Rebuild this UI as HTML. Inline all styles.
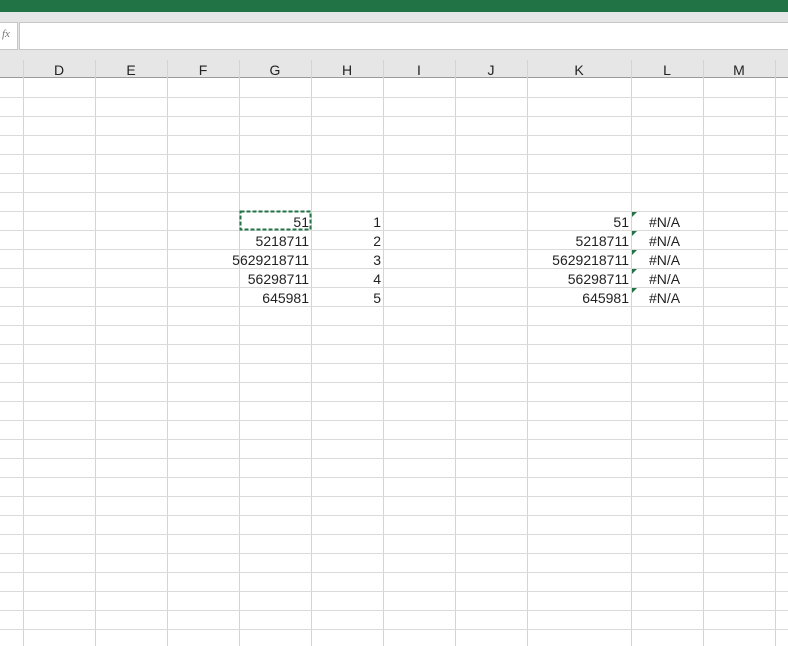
<!DOCTYPE html>
<html><head><style>
body{margin:0;width:788px;height:646px;overflow:hidden;background:#fff;font-family:"Liberation Sans","Noto Sans CJK SC",sans-serif;position:relative}
.a{position:absolute}
.t{position:absolute;font-size:14px;color:#222;text-align:right;line-height:19px}
</style></head><body>
<div class="a" style="left:0;top:0;width:788px;height:12px;background:#217346"></div>
<div class="a" style="left:0;top:12px;width:788px;height:66px;background:#e6e6e6"></div>
<div class="a" style="left:-1px;top:22px;width:17px;height:26px;background:#fff;border:1px solid #c6c6c6"></div>
<div class="a" style="left:2px;top:28px;font:italic 11px 'Liberation Serif',serif;color:#777">fx</div>
<div class="a" style="left:19px;top:22px;width:770px;height:26px;background:#fff;border:1px solid #c6c6c6"></div>
<div class="a" style="left:0;top:77px;width:788px;height:1px;background:#9b9b9b"></div>
<svg class="a" style="left:0;top:0" width="788" height="646">
<g stroke="#d4d4d4" stroke-width="1">
<line x1="23.5" y1="60" x2="23.5" y2="646"/><line x1="95.5" y1="60" x2="95.5" y2="646"/><line x1="167.5" y1="60" x2="167.5" y2="646"/><line x1="239.5" y1="60" x2="239.5" y2="646"/><line x1="311.5" y1="60" x2="311.5" y2="646"/><line x1="383.5" y1="60" x2="383.5" y2="646"/><line x1="455.5" y1="60" x2="455.5" y2="646"/><line x1="527.5" y1="60" x2="527.5" y2="646"/><line x1="631.5" y1="60" x2="631.5" y2="646"/><line x1="703.5" y1="60" x2="703.5" y2="646"/><line x1="775.5" y1="60" x2="775.5" y2="646"/>
</g>
<g stroke="#dadada" stroke-width="1" id="rows"></g>
<rect x="240.5" y="211.5" width="70" height="18" fill="none" stroke="#217346" stroke-width="2" stroke-dasharray="4,2"/>
<g fill="#217346">
<polygon points="632,212 637,212 632,217"/><polygon points="632,231 637,231 632,236"/><polygon points="632,250 637,250 632,255"/><polygon points="632,269 637,269 632,274"/><polygon points="632,288 637,288 632,293"/>
</g>
<g font-family="Liberation Sans" font-size="14" fill="#222" text-anchor="middle">
<text x="59" y="75">D</text><text x="131" y="75">E</text><text x="203" y="75">F</text><text x="275" y="75">G</text><text x="347" y="75">H</text><text x="419" y="75">I</text><text x="491" y="75">J</text><text x="579" y="75">K</text><text x="667" y="75">L</text><text x="739" y="75">M</text>
</g>
<g font-family="Liberation Sans" font-size="14" fill="#222" text-anchor="end">
<text x="309" y="227">51</text><text x="309" y="246">5218711</text><text x="309" y="265">5629218711</text><text x="309" y="284">56298711</text><text x="309" y="303">645981</text>
<text x="381" y="227">1</text><text x="381" y="246">2</text><text x="381" y="265">3</text><text x="381" y="284">4</text><text x="381" y="303">5</text>
<text x="629" y="227">51</text><text x="629" y="246">5218711</text><text x="629" y="265">5629218711</text><text x="629" y="284">56298711</text><text x="629" y="303">645981</text>
</g>
<g font-family="Liberation Sans" font-size="14" fill="#222">
<text x="649" y="227">#N/A</text><text x="649" y="246">#N/A</text><text x="649" y="265">#N/A</text><text x="649" y="284">#N/A</text><text x="649" y="303">#N/A</text>
</g>
</svg>
<script>
var g=document.getElementById('rows'),s='';
for(var y=97;y<646;y+=19){s+='<line x1="0" y1="'+(y+.5)+'" x2="788" y2="'+(y+.5)+'"/>';}
g.innerHTML=s;
</script>
</body></html>
